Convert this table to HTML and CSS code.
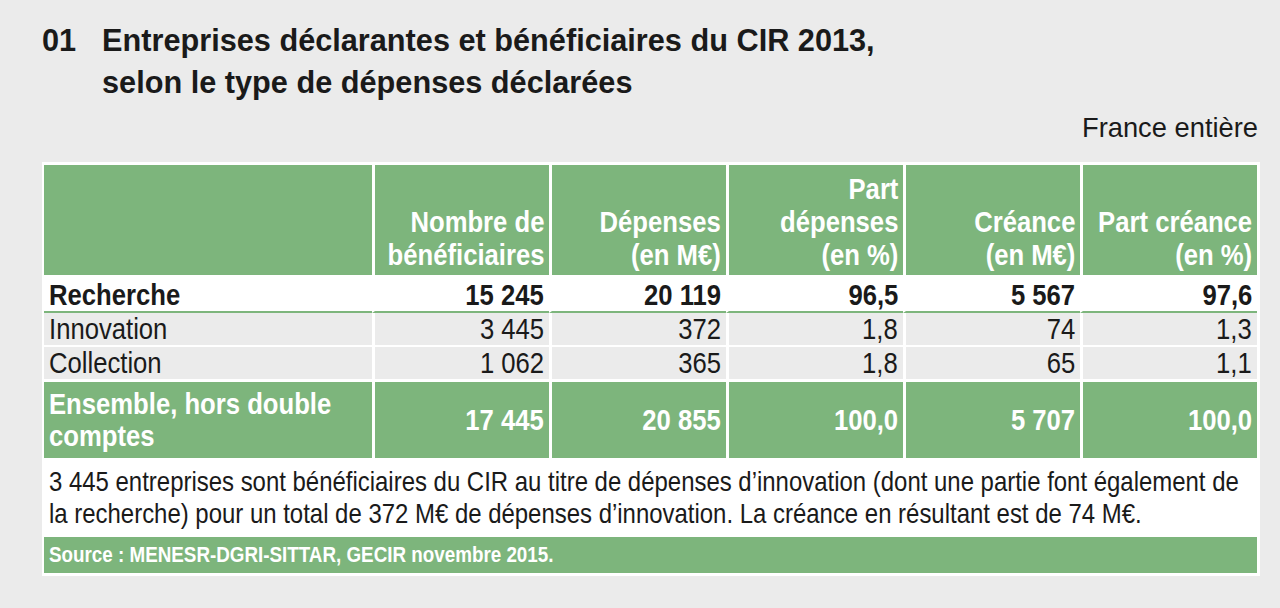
FILE: index.html
```html
<!DOCTYPE html>
<html lang="fr">
<head>
<meta charset="utf-8">
<title>Entreprises déclarantes et bénéficiaires du CIR 2013</title>
<link rel="stylesheet" href="styles.css">
</head>
<body>
<div class="page">
  <h1 class="title">
    <span class="num">01</span>
    <span class="title-text">Entreprises déclarantes et bénéficiaires du CIR 2013,<br>selon le type de dépenses déclarées</span>
  </h1>
  <div class="scope">France entière</div>
  <div class="frame">
    <table class="data">
      <colgroup>
        <col class="c-label">
        <col><col><col><col><col>
      </colgroup>
      <thead>
        <tr>
          <th class="label"></th>
          <th><div class="hc"><span class="n">Nombre de<br>bénéficiaires</span></div></th>
          <th><div class="hc"><span class="n">Dépenses<br>(en M€)</span></div></th>
          <th><div class="hc"><span class="n">Part<br>dépenses<br>(en %)</span></div></th>
          <th><div class="hc"><span class="n">Créance<br>(en M€)</span></div></th>
          <th><div class="hc"><span class="n">Part créance<br>(en %)</span></div></th>
        </tr>
      </thead>
      <tbody>
        <tr class="r-main">
          <td class="label"><span class="n">Recherche</span></td>
          <td><span class="n">15 245</span></td>
          <td><span class="n">20 119</span></td>
          <td><span class="n">96,5</span></td>
          <td><span class="n">5 567</span></td>
          <td><span class="n">97,6</span></td>
        </tr>
        <tr class="r-sub">
          <td class="label"><span class="n">Innovation</span></td>
          <td><span class="n">3 445</span></td>
          <td><span class="n">372</span></td>
          <td><span class="n">1,8</span></td>
          <td><span class="n">74</span></td>
          <td><span class="n">1,3</span></td>
        </tr>
        <tr class="r-sub r-last">
          <td class="label"><span class="n">Collection</span></td>
          <td><span class="n">1 062</span></td>
          <td><span class="n">365</span></td>
          <td><span class="n">1,8</span></td>
          <td><span class="n">65</span></td>
          <td><span class="n">1,1</span></td>
        </tr>
        <tr class="r-total">
          <td class="label"><span class="n">Ensemble, hors double<br>comptes</span></td>
          <td><span class="n">17 445</span></td>
          <td><span class="n">20 855</span></td>
          <td><span class="n">100,0</span></td>
          <td><span class="n">5 707</span></td>
          <td><span class="n">100,0</span></td>
        </tr>
      </tbody>
    </table>
    <p class="note"><span class="n">3 445 entreprises sont bénéficiaires du CIR au titre de dépenses d’innovation (dont une partie font également de<br>la recherche) pour un total de 372 M€ de dépenses d’innovation. La créance en résultant est de 74 M€.</span></p>
    <p class="source"><span class="n">Source : MENESR-DGRI-SITTAR, GECIR novembre 2015.</span></p>
  </div>
</div>
</body>
</html>
```
FILE: styles.css
```css
html, body {
  margin: 0;
  padding: 0;
  background: #ebebeb;
}
body {
  font-family: "Liberation Sans", Arial, Helvetica, sans-serif;
  color: #1a1a1a;
  overflow: hidden;
}
.page {
  padding: 20px 20px 0 42px;
}
/* condensed rendering of the narrow typeface */
.n {
  display: inline-block;
  white-space: nowrap;
  transform: scaleX(0.855);
  transform-origin: right center;
}
.label .n,
.note .n,
.source .n {
  transform-origin: left center;
}
.hc {
  display: flex;
  justify-content: flex-end;
  text-align: right;
}
.title {
  display: flex;
  margin: 0;
  font-size: 30.7px;
  line-height: 42px;
  font-weight: bold;
  color: #1a1a1a;
}
.num {
  width: 60px;
  flex: none;
}
.scope {
  text-align: right;
  font-size: 27.3px;
  line-height: 30px;
  margin-top: 9px;
  margin-bottom: 19px;
  padding-right: 2px;
}
.frame {
  background: #fff;
  padding: 3px 3px 3px 2px;
  overflow: hidden;
}
.data {
  width: 100%;
  border-collapse: separate;
  border-spacing: 0;
  table-layout: fixed;
  font-size: 30px;
}
.c-label { width: 328px; }
.data th, .data td {
  text-align: right;
  padding: 0 5px;
  border-left: 3px solid #fff;
}
.data th.label, .data td.label {
  border-left: none;
  text-align: left;
}
.data thead th {
  background: #7db57c;
  color: #fff;
  font-weight: bold;
  vertical-align: bottom;
  line-height: 33px;
  height: 110px;
  padding-bottom: 4px;
  box-sizing: border-box;
}
.r-main td {
  background: #fff;
  font-weight: bold;
  border-bottom: 2px solid #7db57c;
  line-height: 33px;
  padding-top: 3px;
  padding-bottom: 0;
}
.r-sub td {
  background: #ebebeb;
  border-bottom: 2px solid #fff;
  line-height: 32px;
}
.r-sub.r-last td {
  border-bottom-width: 3px;
}
.r-total td {
  background: #7db57c;
  color: #fff;
  font-weight: bold;
  height: 76px;
  line-height: 32px;
  vertical-align: middle;
  padding-top: 0;
  padding-bottom: 1px;
  box-sizing: border-box;
}
.note {
  margin: 0;
  padding: 8px 5px 7px 5px;
  font-size: 28px;
  line-height: 32px;
  color: #1a1a1a;
}
.source {
  margin: 0;
  background: #7db57c;
  color: #fff;
  font-weight: bold;
  font-size: 22px;
  line-height: 36px;
  padding: 0 5px;
}
```
